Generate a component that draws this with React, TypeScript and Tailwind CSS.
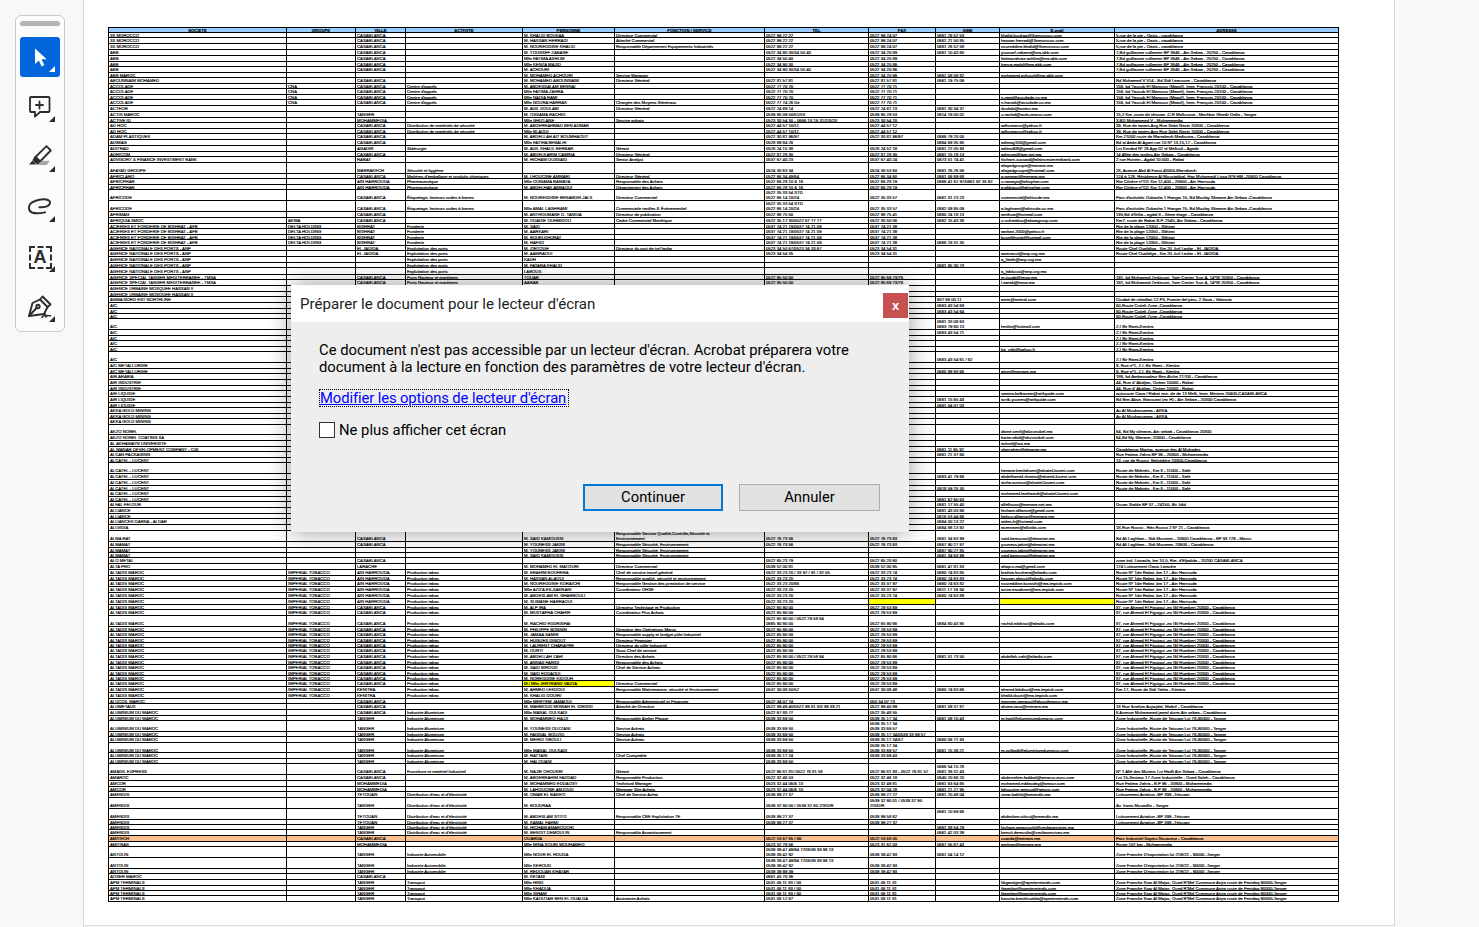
import React from "react";

const gridCols = "grid grid-cols-[178px_69px_50px_117px_92px_150px_104px_67px_64px_115px_224px]";
const HEADERS = ["SOCIETE", "GROUPE", "VILLE", "ACTIVITE", "PERSONNE", "FONCTION / SERVICE", "TEL", "FAX", "GSM", "E-mail", "ADRESSE"];

const OASIS = "5,rue de la pie - Oasis - casablanca";
const ABB_AD = "7,Bd guillaume vullemier BP 3646 - Ain Sebaa , 20250 - Casablanca";
const ACC_AD = "156, bd Yacoub El Mansour (Maarif), Imm. François 20100 - Casablanca";
const ADHOC_AD = "39, Rue de tantes Ang Rue Sebti Nevin 20300 - Casablanca";
const AFCODE_AD = "Parc d'activités Oukacha 1 Hangar 15, Bd Moulay Slimane Ain Sebaa -Casablanca";
const PHAR_AD = "Rte Côtière n°111 Km 12,400 - 20600 - Ain Harrouda";
const PLAGE = "Rte de la plage 12050 - Skhirat";
const ANP = "AGENCE NATIONALE DES PORTS - ANP";
const TMSA = "AGENCE SPECIAL TANGER MEDITERRANEE - TMSA";
const TMSA_AD = "191, bd Mohamed Zerktouni, Twin Center Tour A, 14°W 20350 - Casablanca";
const ANP_AD = "Route Chel Oualidiya , Km 20 Jorf Lasfar - EL JADIDA";
const ACIER = "ACIERIES ET FONDERIE DE BISHRAT - AFB|DELTA HOLDING|BISHRAT|Fonderie";
const COTIERE = "60,Route Cotieli Zone -Casablanca";
const RAMI = "Z.I Bir Rami-Kenitra";
const MEKNES = "Route de Meknès , Km 8 - 11000 - Salé";
const ALT = "ALTADIS MAROC|IMPERIAL TOBACCO";
const ALTH = `${ALT}|AIN HARROUDA|Production tabac`;
const ALTC = `${ALT}|CASABLANCA|Production tabac`;
const ALTK = `${ALT}|KENITRA|Production tabac`;
const HAR_AD = "Route N° 1de Rabat ,km 17 - Ain Harrouda";
const FIG_AD = "87, rue Ahmed El Figuigui -ex Gil Humbert 20300 - Casablanca";
const ALUT = "ALUMINIUM DU MAROC||TANGER|Industrie Aluminium";
const TET_AD = "Zone Industrielle ,Route de Tetouan Lot 78-90000 - Tanger";
const LOT_AD = "Lotissement Aviation -BP 399 -Tétouan";
const DIST = "Distribution d'eau et d'électricité";
const ANT = "ANTOLIN||TANGER|Industrie Automobile";
const ZF = "Zone Franche D'exportation lot 21B/22 - 90000 -Tanger";
const APM = "APM TERMINALS||TANGER|Transport";
const KSAR = "Zone Franche Ksar Al Majaz, Oued R'Mel Commune Anjra route de Fenidaq 90000-Tanger";
const FIX = "0522 65 90 00|0522 29 53 69";
const ALMA_T = "Responsable Sécurité, Environnement";

// row bottom edge (y in page) | société | groupe | ville | activité | personne | fonction | tel | fax | gsm | email | adresse
const ROWS: [number, string][] = [
  [38, `3S MOROCCO||CASABLANCA||M. KHALID BOUKAA|Directeur Commercial|0522 99 22 22|0522 99 24 07|0661 26 52 53|khalid-boukaa@3smorocco.com|${OASIS}`],
  [44, `3S MOROCCO||CASABLANCA||M. HASSAN HERRADI|Attaché Commercial|0522 99 22 22|0522 99 24 07|0661 21 50 85|hassan.herradi@3smorocco.com|${OASIS}`],
  [50, `3S MOROCCO||CASABLANCA||M. NOUREDDINE KHALID|Responsable Département Equipements Industriels|0522 99 22 22|0522 99 24 07|0661 26 52 58|noureddine.khalid@3smorocco.com|${OASIS}`],
  [56, `ABB||CASABLANCA||M. YOUSSEF ZABANE||0522 34 90 30/34 50 40|0522 34 20 89|0661 10 43 80|youssef.zabane@ma.abb.com|${ABB_AD}`],
  [62, `ABB||CASABLANCA||Mlle FATIMA ASHLIM||0522 34 50 40|0522 34 20 89||fatimazahrae.ashlim@ma.abb.com|${ABB_AD}`],
  [67, `ABB||CASABLANCA||Mlle KENZA MAJID||0522 34 90 30|0522 34 20 86||kenza.majid@ma.abb.com|${ABB_AD}`],
  [73, `ABB||CASABLANCA||M. ACHOURI||0522 34 90 30/34 50 40|0522 34 20 86|||${ABB_AD}`],
  [78, `ABB MAROC||||M. MOHAMED ACHOURI|Service Manager||0522 34 20 86|0661 08 08 82|mohamed.achouri@ma.abb.com|`],
  [84, `ABOUNNAIM MOHAMED||CASABLANCA||M. MOHAMED ABOUNNAIM|Directeur Général|0522 81 57 81|0522 81 57 81|0661 19 75 09||Bd Mohamed V 514 - Bd Sidi Laaroune - Casablanca`],
  [89, `ACCOLADE|CNA|CASABLANCA|Centre d'appels|M. ABDESSALAM BENNAI||0522 77 70 70|0522 77 70 71|||${ACC_AD}`],
  [95, `ACCOLADE|CNA|CASABLANCA|Centre d'appels|Mlle FATIMA ZAHRA||0522 77 70 70|0522 77 70 71|||${ACC_AD}`],
  [100, `ACCOLADE|CNA|CASABLANCA|Centre d'appels|Mlle NADIA RAMI||0522 77 70 70|0522 77 70 71||n.rami@accolade.co.ma|${ACC_AD}`],
  [106, `ACCOLADE|CNA|CASABLANCA|Centre d'appels|Mlle NOURA HARRAK|Chargée des Moyens Généraux|0522 77 74 26 Dir|0522 77 70 71||n.harrak@accolade.co.ma|${ACC_AD}`],
  [112, `ACTEOR||||M. ADIL DOULABI|Directeur Général|0522 24 89 14|0522 24 81 13|0661 30 34 37|doulabi@acteor.ma|`],
  [118, `ACTIS MAROC||TANGER||M. OSSAMA RACHID||0539 95 09 50/51/53|0539 95 29 53|0614 18 00 02|o.rachid@actis-maroc.com|15,2 Km ,route de tétouan ,C.R Melloussa , Mechkar Ghedir Dalla - Tanger`],
  [123, `ACTIVE ID||MOHAMMEDIA||Mlle GHIZLANE|Service achats|0523 30 54 30 - 0666 18 19 31/2/3/20|0523 30 54 20|||3,BD Mohammed V - Mohammedia`],
  [129, `AD HOC||CASABLANCA|Distribution de matériels de sécurité|M. ABDERRAHMAD BEN ADMAR||0522 44 57 10/11|0522 44 57 12||adhomaroc@yahoo.fr|${ADHOC_AD}`],
  [134, `AD HOC||CASABLANCA|Distribution de matériels de sécurité|Mlle BLAOUI||0522 44 57 10/11|0522 44 57 12||adhomaroc@yahoo.fr|${ADHOC_AD}`],
  [140, `ADAM PLASTIQUES||CASABLANCA||M. ABDELLAH AIT BOUMHAOUT||0522 30 81 96/97|0522 30 81 96/97|0666 79 20 00||Km 21000 route de Marrakech Mediouna - Casablanca`],
  [146, `ADIMAG||CASABLANCA||Mlle FATIHA BEBALHI||0528 89 84 26||0664 69 35 95|adimag100@gmail.com|Bd al Aéde Al Agani rue 10 N° 13,15,17 - Casablanca`],
  [152, `ADITRAD||AGADIR|Sidérurgie|M. ADIL KHALIL BERBAR|Gérant|0528 24 15 38|0528 24 52 18|0661 22 05 93|aditrad09@gmail.com|Lot Kerdad N° 26 App 02 el Mellouli - Agadir`],
  [157, `ADRICOM||CASABLANCA||M. ABDELKARIM CAMINA|Directeur Général|0522 87 28 30|0522 87 28 30|0661 15 18 13|adricom@iam.net.ma|14 Allée des jardins Ain Sebaa - Casablanca`],
  [163, `ADVISORY & FINANCE INVESTMENT BANK||RABAT||M. HICHAM OUSSAID|Senior Analyst|0537 67 40 23|0537 67 40 24|0673 51 74 41|hicham.oussaid@afainvestmentbank.com|2 rue Honein - Agdal 10 000 - Rabat`],
  [174, `AFAYAD GROUPE||MARRAKECH|Sécurité et hygiène|||0524 30 63 34|0524 30 53 60|0661 26 26 56|afayadgroupe@menara.ma~afayadgroupe@hotmail.com|28, Avenue Abd Al Fassi,40000-Marrakech`],
  [179, `AFRICLARO||CASABLANCA|Matières d'emballage et produits chimiques|M. LHOUCINE AMMARI|Directeur Général|0522 66 34 49/64|0522 66 34 60|0661 06 69 68|a.ammari@menara.ma|124 à 128, Résidence Al Moustakbal, Hay Mohamadi Lissa N°9 HM -20600 Casablanca`],
  [185, `AFRICPHAR||AIN HARROUDA|Pharmaceutique|Mlle OUMAMA RAMAYA|Responsable des Achats|0522 66 28 10 & 16|0522 66 28 19|0666 41 61 97/0661 92 35 92|o.ramaya@africphar.com|${PHAR_AD}`],
  [190, `AFRICPHAR||AIN HARROUDA|Pharmaceutique|M. ABDELHAK ABBAOUI|Département des Achats|0522 66 28 10 & 16|0522 66 28 19||a.abbaoui@africphar.com|${PHAR_AD}`],
  [201, `AFRICODE||CASABLANCA|Étiquetage, lecteurs codes à barres|M. NOUREDDINE BENABDELJALIL|Directeur Commercial|0522 35 33 54 STD~0522 66 14 20/24|0522 35 33 57|0661 31 23 23|commercial@africode.ma|${AFCODE_AD}`],
  [212, `AFRICODE||CASABLANCA|Étiquetage, lecteurs codes à barres|Mlle AMAL LAGHRAMI|Commerciale textiles & Événementiel|0522 35 33 54 STD~0522 66 14 20/24|0522 35 33 57|0662 09 95 09|a.laghrami@africode.co.ma|${AFCODE_AD}`],
  [218, `AFRIMAG||CASABLANCA||M. ANTHOUMANE D. TANDIA|Directeur de publication|0522 98 75 50|0522 98 75 41|0660 24 18 13|amthoa@hotmail.com|195,Bd d'Ifrifia - agdal 8 - 3ème étage - Casablanca`],
  [224, `AFRIQUIA SMDC|AKWA|CASABLANCA||M. OUADIE OUHMIDOU|Cadre Commercial Marétique|0522 35 17 30/0522 67 77 77|0522 35 50 56|0662 15 43 38|o.ouhmidou@akwagroup.com|Km7, route de Rabat B.P. 2545, Ain Sebaa - Casablanca`],
  [229, `${ACIER}|M. SAID||0537 74 21 19/0537 74 21 09|0537 74 21 38|||${PLAGE}`],
  [235, `${ACIER}|M. AARKARI||0537 74 21 19/0537 74 21 09|0537 74 21 38||aarkari.2000@yahoo.fr|${PLAGE}`],
  [240, `${ACIER}|M. BOUELKHURAT||0537 74 21 19/0537 74 21 09|0537 74 21 38||bouelkhurat@hotmail.com|${PLAGE}`],
  [246, `${ACIER}|M. HAFIDI||0537 74 21 19/0537 74 21 09|0537 74 21 38|0666 19 31 35||${PLAGE}`],
  [251, `${ANP}||EL JADIDA|Exploitation des ports|M. ZIRTOUH|Directeur du port de jorf lasfar|0523 34 50 67/0523 34 33 67|0523 34 54 31|||${ANP_AD}`],
  [257, `${ANP}||EL JADIDA|Exploitation des ports|M. AAMRAOUI||0523 34 54 35|0523 34 54 31||aamraoui@anp.org.ma|${ANP_AD}`],
  [263, `${ANP}|||Exploitation des ports|KADH|||||a_fatah@anp.org.ma|`],
  [268, `${ANP}|||Exploitation des ports|M. FATARA KHALID||||0661 95 30 73||`],
  [275, `${ANP}|||Exploitation des ports|LABOUS|||||a_labbous@anp.org.ma|`],
  [280, `${TMSA}||CASABLANCA|Ports Navieux et maritimes|TOUAR||0522 95 50 00|0522 95 69 73/76||m.touab@tmsa.ma|${TMSA_AD}`],
  [286, `${TMSA}||CASABLANCA|Ports Navieux et maritimes|AARAB||0522 95 50 00|0522 95 69 73/76||l.aarab@tmsa.ma|${TMSA_AD}`],
  [292, `AGENCE URBAINE MOSQUEE HASSAN II||||||||||`],
  [297, `AGENCE URBAINE MOSQUEE HASSAN II||||||||||`],
  [303, `AGMA NORD EST NORTHLINE||||||||607 66 00 11|amin@amival.com|Ciudad de cittadlan 12 P3, Fuente del pino, 2 Saca - Valencia`],
  [309, `AIC||||||||0663 43 54 69||${COTIERE}`],
  [314, `AIC||||||||0663 43 54 64||${COTIERE}`],
  [319, `AIC||||||||||${COTIERE}`],
  [330, `AIC||||||||0661 33 08 63~0663 79 60 13|hmitte@hotmail.com|${RAMI}`],
  [336, `AIC||||||||0663 43 54 71||${RAMI}`],
  [341, `AIC||||||||||${RAMI}`],
  [347, `AIC||||||||||${RAMI}`],
  [352, `AIC|||||||||ka_zeki@yahoo.fr|${RAMI}`],
  [363, `AIC||||||||0663 43 54 61 / 62||${RAMI}`],
  [369, `AIC METALLURGIE||||||||||9, Rue n°1, Z.I. Bir Rami - Kénitra`],
  [374, `AIC METALLURGIE||||||||0660 99 93 66|aiion@menara.ma|9, Rue n°1, Z.I. Bir Rami - Kénitra`],
  [380, `AIR ARABIA||||||||||186, bd Ambassadeur Ben Aïcha 21700 - Casablanca`],
  [386, `AIR INDUSTRIE||||||||||44, Rue d' Abidjan, Océan 10000 - Rabat`],
  [391, `AIR INDUSTRIE||||||||||44, Rue d' Abidjan, Océan 10000 - Rabat`],
  [397, `AIR LIQUIDE|||||||||samira.belbacem@airliquide.com|autoroute Casa / Rabat ecn. de de 13 Melli, Imm. Meriem 20400-CASABLANCA`],
  [403, `AIR LIQUIDE||||||||0661 15 65 43|azrib.younes@airliquide.com|Bd Ben Abse, Biarouani (ex H) - Ain Sebaa - 20300 Casablanca`],
  [408, `AIR LIQUIDE||||||||0661 04 07 03||`],
  [414, `AKKA GOLD MINING||||||||||Av Al Moukaouama - AKKA`],
  [419, `AKKA GOLD MINING||||||||||Av Al Moukaouama - AKKA`],
  [425, `AKKA GOLD MINING||||||||||`],
  [435, `AKZO NOBEL|||||||||diane.senfi@akzonobel.ma|64, Bd My slimane- Ain sebaâ - Casablanca 20300`],
  [441, `AKZO NOBEL COATING SA|||||||||karim.abid@akzonobel.com|64,Bd My Slimane, 20300 - Casablanca`],
  [447, `AL AKHAWAYN UNIVERSITE|||||||||ashraf@aui.ma|`],
  [452, `AL MANAR DEVELOPMENT COMPANY - CGI||||||||0661 11 65 92|yberrahim@almanar.ma|Casablanca Marina, avenue des Al Mohades`],
  [458, `ALCAN PACKAGING||||||||0661 21 37 60||Rue Fatima Zahra BP 96 - 20800 - Mohammedia`],
  [463, `ALCATEL - LUCENT||||||||||13, rue de Rocroi, Belvédère 20300-Casablanca`],
  [474, `ALCATEL - LUCENT|||||||||hanane.benlahsen@alcatel-lucent.com|${MEKNES}`],
  [480, `ALCATEL - LUCENT||||||||0663 41 79 68|abdelhamid.chemsi@alcatel-lucent.com|${MEKNES}`],
  [486, `ALCATEL - LUCENT|||||||||aicha.aznioui@alcatel-lucent.com|${MEKNES}`],
  [491, `ALCATEL - LUCENT||||||||0618 59 25 30||${MEKNES}`],
  [497, `ALCATEL - LUCENT|||||||||mohamed.lamhamdi@alcatel-lucent.com|`],
  [502, `ALCATEL - LUCENT||||||||0661 62 60 63||`],
  [508, `ALFAL FELOUR||||||||0661 17 55 40|alfellouss@menara.net.ma|Douar Stable BP 37 - 24150- Bir Jdid`],
  [514, `ALLIANCE||||||||0661 43 03 66|hicham.alliance@gmail.com|`],
  [519, `ALLIANCE||||||||0616 53 44 66|bahou.alliance@menara.ma|`],
  [525, `ALLIANCES DARNA - ALDAR||||||||0664 00 13 22|aiden-h@hotmail.com|`],
  [531, `ALLVIDIA||||||||0664 98 13 92|asennami@allvidia.com|18,Rue Rocroi , Rés Rocroi 2 N° 21 - Casablanca`],
  [542, `ALMA RAT||CASABLANCA||M. SAID KAMOUSSI|Responsable Service Qualité,Contrôle,Sécurité et~Environnement|0522 76 73 56|0522 76 73 63|0661 34 63 99|said.kamoussi@almatrat.ma|Bd Ali Laghlam - Sidi Moumen - 20600 Casablanca - BP 93 729 - Maroc`],
  [548, `ALMAMAT||CASABLANCA||M. YOUNESS JAKINI|${ALMA_T}|0522 76 73 56|0522 76 73 63|0667 90 27 87|youness.jakini@almatrat.ma|Bd Ali Laghlam - Sidi Moumen, 20600 - Casablanca`],
  [553, `ALMAMAT||||M. YOUNESS JAKINI|${ALMA_T}|||0667 90 27 85|youness.jakini@almatrat.ma|`],
  [558, `ALMAMAT||||M. SAID KAMOUSSI|${ALMA_T}|||0661 34 63 99|said.kamoussi@almatrat.ma|`],
  [564, `ALO METAL||CASABLANCA||||0522 65 23 79|0522 65 20 60|||zone ind. Lissasfa, km 10,5, Rte. d'Eljadida - 20200 CASABLANCA`],
  [570, `ALTA PRO||LARACHE||M. MOHAMED EL MATOURI|Directeur Commercial|0539 52 00 81|0539 52 00 95|0661 47 81 83|altapro.ma@gmail.com|174 Lotissement Oasis Larache`],
  [576, `${ALTH}|M. ERAHIM BOUHERA|Chef de service travel général|0522 33 23 20 / 33 97 / 91 / 82 05|0522 33 23 74|0660 74 63 85|brahim.bouhera@altadis.com|${HAR_AD}`],
  [581, `${ALTH}|M. HASSAN ALAOUI|Responsable qualité, sécurité et environnement|0522 33 23 20|0522 33 23 74|0660 74 63 83|hassan.alaoui@altadis.com|${HAR_AD}`],
  [587, `${ALTH}|M. NOUREDDINE KORAICHI|Responsable Gestion des prestation de service|0522 33 23 20/66|0522 33 37 97|0660 74 63 82|noureddine.koraichi@ma.imptob.com|${HAR_AD}`],
  [593, `${ALTH}|Mlle AZIZA ES-SAKRANI|Coordinateur OHSE|0522 33 23 20|0522 33 37 97|0611 17 19 34|aziza.essakrani@ma.imptob.com|${HAR_AD}`],
  [599, `${ALTH}|M. ABDESLAM EL GHARBOULI||0522 33 23 20|0522 33 23 74|0660 74 63 89||${HAR_AD}`],
  [605, `${ALTH}|M. SLIMANE HARRAOUI||0522 33 23 20||||${HAR_AD}`],
  [610, `${ALTC}|M. ALP IRA|Directeur Technique et Production|${FIX}|||${FIG_AD}`],
  [616, `${ALTC}|M. MUSTAPHA CHAHIR|Coordinateur Flux Achats|${FIX}|||${FIG_AD}`],
  [627, `${ALTC}|M. RACHID EDDRISHAI||0522 65 90 00 / 0522 29 58 64~0665 90 90 00|0522 65 90 66|0664 60 43 95|rachid.eddrissi@altadis.com|${FIG_AD}`],
  [632, `${ALTC}|M. PHILIPPE BONNIN|Directeur des Opérations Maroc|${FIX}|||${FIG_AD}`],
  [638, `${ALTC}|M. JAMAA SAMIR|Responsable supply et budget pôle Industriel|${FIX}|||${FIG_AD}`],
  [643, `${ALTC}|M. HUGUES DIGOUT|Directeur Financier|${FIX}|||${FIG_AD}`],
  [648, `${ALTC}|M. LAURENT CHARAYRE|Directeur du pôle Industriel|${FIX}|||${FIG_AD}`],
  [654, `${ALTC}|M. OURTI|Sous Chef de service|${FIX}|||${FIG_AD}`],
  [660, `${ALTC}|M. ABDELLAH ZAHI|Direction des Achats|0522 65 90 00 / 0522 29 58 64|0522 65 90 66|0661 51 73 50|abdellah.zahi@altadis.com|${FIG_AD}`],
  [665, `${ALTC}|M. ANNAS FARIDI|Responsable des Achats|${FIX}|||${FIG_AD}`],
  [671, `${ALTC}|M. SAID BIROUD|Chef de Service Achats|${FIX}|||${FIG_AD}`],
  [676, `${ALTC}|M. SAID EDDAOUI||${FIX}|||${FIG_AD}`],
  [681, `${ALTC}|M. NOREDDINE KIDOUH||${FIX}|||${FIG_AD}`],
  [687, `${ALTC}|M./ Mlle JERTRAND VAIZIA|Directeur Commercial|${FIX}|||${FIG_AD}`],
  [693, `${ALTK}|M. AHMED LEKDOUI|Responsable Maintenance, sécurité et Environnement|0537 30 08 50/52|0537 30 08 48|0660 74 63 66|ahmed.lekdioui@ma.imptob.com|Km 17, Route de Sidi Yahia - Kénitra`],
  [699, `${ALTK}|M. KHALID DOUIRI|||||khalid.douiri@ma.imptob.com|`],
  [704, `ALUCOIL MAROC||CASABLANCA||Mlle MERYEM JAMAOUI|Responsable Administratif et Financier|0522 34 07 74|050 34 07 73||meryem.jamaoui@alucoilmaroc.ma|`],
  [710, `ALUMETAUX||CASABLANCA||M. MAHMOUD MISBAH EL IDRISSI|Attaché de Direction|0522 99 49 40/0522 99 81 93/ 99 39 21|0522 99 40 99|0661 09 37 87|alume-taux@menara.ma|18 Rue Ibrahim Aujarjdal, Maârif - Casablanca`],
  [716, `ALUMINIUM DU MAROC||CASABLANCA|Industrie Aluminium|Mlle MANAL OULKADI||0522 67 80 77|0522 35 48 55|||6 Avenue Mohammed jamal dorra Ain sebaa - Casablanca`],
  [721, `${ALUT}|M. MOHAMMED HAJJI|Responsable Atelier Plaque|0539 33 69 50|0539 35 17 34|0661 09 10 43|m.hajji@aluminiumdumaroc.com|${TET_AD}`],
  [732, `${ALUT}|M. YOUNESS OUZZANI|Service Achats|0539 33 69 50|0539 35 17 34~0539 33 69 57|||${TET_AD}`],
  [737, `${ALUT}|M. FAISSAL BOUZID|Service Achats|0539 33 69 50|0539 35 17 34/0539 33 69 57|||${TET_AD}`],
  [743, `${ALUT}|M. MEHDI TIBOULI|Service Achats|0539 33 69 50|0539 35 17 34/57|0660 06 71 93||${TET_AD}`],
  [753, `${ALUT}|Mlle MANAL OULKADI||0539 33 69 50|0539 35 17 34~0539 33 69 57|0661 15 38 21|m.oulkadi@aluminiumdumaroc.com|${TET_AD}`],
  [759, `${ALUT}|M. RATTANI|Chef Comptable|0539 35 17 24|0539 33 69 43|||${TET_AD}`],
  [764, `${ALUT}|M. HALOUANI||0539 33 69 50||||${TET_AD}`],
  [775, `AMADIL EXPRESS||CASABLANCA|Fourniture et matériel Industriel|M. NAJIB CHOUKRI|Gérant|0522 66 81 81/ 0522 76 81 58|0522 66 81 93 - 0522 76 81 57|0666 54 15 28~0661 39 32 43||N° 1 Allé des Muriers Lot Hadfi Ain Sebaa - Casablanca`],
  [781, `AMAROC||CASABLANCA||M. ABDERRAHIM FADDAD|Responsable Production|0522 32 46 53|0522 32 46 18|0640 20 66 20|abderrahim.faddad@amaroc-ecro.com|Lot 15-Secteur 17 Zone Industrielle , Oued Saleh - Casablanca`],
  [787, `AMCOR||MOHAMMEDIA||M. MOHAMMED EDDAOSY|Technical Manager|0523 32 44 06/& 13|0523 32 49 81|0661 63 64 65|mohamed.eddaoday@amcor.com|Rue Fatima Zahra - B.P 96 , 20800 - Mohammedia`],
  [792, `AMCOR||MOHAMMEDIA||M. LAHOUCINE AMJOUD|Manager Site Achats|0523 32 44 06/& 10|0523 32 04 28|0661 21 27 95|lahoucine.amjoud@amcor.com|Rue Fatima Zahra - B.P 96 , 20800 - Mohammedia`],
  [798, `AMENDIS||TETOUAN|${DIST}|M. OMAR EL BAKHTI|Chef de Service Achat|0539 99 27 37|0539 99 27 27|0661 20 48 04|omar.bakhti@amendis.ma|${LOT_AD}`],
  [809, `AMENDIS||TANGER|${DIST}|M. BOUDRAA||0539 32 90 00 / 0539 32 60 2/3/D/R|0539 32 90 01 / 0539 32 90~2/3/D/R|||Av. Iranis Mouadlin - Tanger`],
  [820, `AMENDIS||TETOUAN|${DIST}|M. ABDESLAM STITO|Responsable CBE Exploitation TE|0539 99 27 37|0539 99 58 62|0661 10 69 66~ |abdeslam.stitou@amendis.ma|${LOT_AD}`],
  [825, `AMENDIS||TETOUAN|${DIST}|M. KAMAL FAHMI||0539 99 27 37|0539 99 27 37|||${LOT_AD}`],
  [830, `AMENDIS||TANGER|${DIST}|M. HICHAM AMAROUCHI||||0661 38 54 29|hicham.amarouchi@veoliaservices.ma|`],
  [836, `AMENDIS||TANGER|${DIST}|M. BENOIT DEMOULIN|Responsable Assainissement|||0661 42 03 39|benoit.demoulin@veoliaservices.ma|`],
  [842, `AMITECH||CASABLANCA||OUARDA||0522 53 67 65 / 66|0522 53 68 05||ouarda@menara.ma|Parc Industriel Sapino Nouaceur - Casablanca`],
  [847, `AMITRAS||MOHAMMEDIA||Mlle MINA SOURI MOUHAMED||0523 32 78 56|0523 31 62 03|0667 05 87 43|amitras@menara.ma|Route 107 km - Mohammedia`],
  [858, `${ANT}|Mlle NOUR EL HOUDA||0539 39 47 49/94 72/0539 39 99 13~0539 39 42 92|0539 39 42 93|0661 04 14 12||${ZF}`],
  [869, `${ANT}|Mlle KEROUD||0539 39 47 49/94 72/0539 39 99 13~0539 39 42 92|0539 39 42 93|||${ZF}`],
  [874, `${ANT}|M. REDOUAN KHAYAR||0539 39 99 39|0539 39 42 93|||${ZF}`],
  [880, `AOSER MAROC||CASABLANCA||M. KETANI||0661 43 70 36||||`],
  [886, `${APM}|Mlle HIND||0531 06 11 83 / 00|0531 06 11 81||hbgantiger@apmterminals.com|${KSAR}`],
  [891, `${APM}|Mlle KHADIJA||0531 06 11 83 / 00|0531 06 11 81||tkamitiar@apmterminals.com|${KSAR}`],
  [896, `${APM}|Mlle SIHAM||0531 06 11 83 / 00|0531 06 11 81||tkamitiar@apmterminals.com|${KSAR}`],
  [902, `${APM}|Mlle KAOUTAR BEN EL OUALDA|Assistante Achats|0531 06 12 87|0531 06 11 81||kaoutar.beneloualda@apmterminals.com|${KSAR}`],
];

const cellBg = (end: number, col: number) => {
  if (end === 842) return "bg-[#fac090]";
  if (end === 687 && col === 4) return "bg-[#ffff00]";
  if (end === 605 && (col === 7 || col === 9)) return "bg-[#ffff00]";
  return "";
};

const PdfTable = () => {
  let prev = 33;
  return (
    <div className="w-[1231px] border-l border-t border-black font-['Liberation_Sans',sans-serif] text-[4.25px] leading-[5px] text-black [-webkit-text-stroke:0.15px_black]">
      <div className={`${gridCols} h-[5px] border-b border-black bg-[#99ccff] font-bold`}>
        {HEADERS.map((h) => (
          <div key={h} className="flex items-end justify-center border-r border-black">
            {h}
          </div>
        ))}
      </div>
      {ROWS.map(([end, line]) => {
        const height = end - prev;
        prev = end;
        const cells = line.split("|");
        return (
          <div key={end} className={`${gridCols} border-b border-black`} style={{ height }}>
            {Array.from({ length: 11 }).map((_, i) => (
              <div
                key={i}
                className={`flex min-w-0 items-end whitespace-pre border-r border-black pl-px ${cellBg(end, i)}`}
              >
                <span>{(cells[i] ?? "").replace("~", "\n")}</span>
              </div>
            ))}
          </div>
        );
      })}
    </div>
  );
};

const Corner = ({ light }: { light?: boolean }) => (
  <svg viewBox="0 0 6 6" className="absolute left-[29px] top-[29px] h-[6px] w-[6px]">
    <path d="M6 0V6H0Z" fill={light ? "#ffffff" : "#2c2c2c"} />
  </svg>
);

const ToolButton = ({ active, children }: { active?: boolean; children: React.ReactNode }) => (
  <div className={`relative flex h-10 w-10 items-center justify-center rounded-[3px] ${active ? "bg-[#0265dc]" : ""}`}>
    {children}
    <Corner light={active} />
  </div>
);

const Sidebar = () => (
  <div className="w-[84px] shrink-0 border-r border-[#d9d9d9] bg-[#f8f8f8] pl-[15px] pt-[15px]">
    <div className="flex h-[317px] w-[50px] flex-col items-center gap-[10px] rounded-[6px] border border-[#c9c9c9] bg-[#fbfbfb] px-1 pt-[5px]">
      <div className="mb-px h-[5px] w-10 rounded-full bg-[#b3b3b3]" />
      <ToolButton active>
        <svg viewBox="0 0 24 24" className="h-6 w-6">
          <path d="M7 3.5v15.5l3.8-3.6 2.8 6 2.7-1.3-2.8-5.8h5.2z" fill="#fff" />
        </svg>
      </ToolButton>
      <ToolButton>
        <svg viewBox="0 0 24 24" className="h-6 w-6" fill="none" stroke="#2c2c2c" strokeWidth="1.8" strokeLinejoin="round" strokeLinecap="round">
          <path d="M3 2h17.500a1 1 0 0 1 1 1v13a1 1 0 0 1-1 1h-8.500l-5 4.700v-4.700H3a1 1 0 0 1-1-1V3a1 1 0 0 1 1-1z" />
          <path d="M11.500 6.500v7M8 10h7" />
        </svg>
      </ToolButton>
      <ToolButton>
        <svg viewBox="0 0 24 24" className="h-6 w-6" fill="none" stroke="#2c2c2c" strokeWidth="1.8" strokeLinejoin="round">
          <path d="M18.500 1.200l4.300 4.300-10.800 11-4.500-4.500z" />
          <path d="M7.500 12l4.500 4.500-2.500 2-4-3.500z" fill="#2c2c2c" />
          <path d="M4.500 15.500l4 4H1z" fill="#2c2c2c" stroke="none" />
          <path d="M9.300 20l4.400-4.300H22L18.700 20z" fill="#a6a6a6" stroke="none" />
        </svg>
      </ToolButton>
      <ToolButton>
        <svg viewBox="0 0 24 24" className="h-6 w-6" fill="none" stroke="#2c2c2c" strokeWidth="1.9" strokeLinecap="round">
          <path d="M17 17.300C12 18.500 7 18.500 4 17.500 1.500 16.500 .8 14 1 12c.5-3 3-5 6-6 4-1.500 8-2 11-1.500 3 .5 4.500 2 4 3.500-.5 2.500-4 4-8 4.300h-2.700" />
        </svg>
      </ToolButton>
      <ToolButton>
        <div className="flex h-[23px] w-[23px] items-center justify-center border-2 border-dashed border-[#2c2c2c] font-['Liberation_Sans',sans-serif] text-[18px] font-bold leading-none text-[#2c2c2c]">
          A
        </div>
      </ToolButton>
      <ToolButton>
        <svg viewBox="0 0 24 24" className="h-6 w-6" fill="none" stroke="#2c2c2c" strokeWidth="1.9" strokeLinejoin="round" strokeLinecap="round">
          <path d="M1 21L4.500 8 12 4.500l7.500 7.500L16 19z" />
          <path d="M12 4.500L14.500 1.500l8 8L19.500 12" />
          <path d="M1 21l7.500-8" />
          <circle cx="10" cy="11.500" r="1.700" />
          <path d="M14 22.500c1-1.500 2.500-3.500 3.500-3 .8.500-.3 2-.3 2.300 1 .3 1.800-1.500 2.800-1.300l2.500.3" strokeWidth="1.500" />
        </svg>
      </ToolButton>
    </div>
  </div>
);

const ScreenReaderDialog = () => (
  <div className="absolute left-[291px] top-[285px] flex h-[247px] w-[618px] flex-col bg-[#eeeeee] font-['Roboto',sans-serif] text-[14.800px] text-black shadow-[0_0_22px_rgba(0,0,0,0.4)]">
    <div className="flex h-[37px] shrink-0 items-start justify-between bg-white pl-[9px] pr-px pt-2">
      <span className="text-[15.100px] leading-[22px] text-[#222]">Préparer le document pour le lecteur d'écran</span>
      <div className="flex h-[25px] w-[25px] items-center justify-center bg-[#c75050] font-['Liberation_Sans',sans-serif] text-[13px] font-bold text-white">
        x
      </div>
    </div>
    <div className="flex flex-1 flex-col pl-7 pr-[20px] pt-5">
      <p className="whitespace-nowrap leading-[17px]">
        Ce document n'est pas accessible par un lecteur d'écran. Acrobat préparera votre
        <br />
        document à la lecture en fonction des paramètres de votre lecteur d'écran.
      </p>
      <a className="mt-[13px] flex h-[18px] w-[250px] items-center border border-dotted border-black tracking-[-0.1px] text-[#0000ff] underline">
        Modifier les options de lecteur d'écran
      </a>
      <label className="mt-[15px] flex items-center gap-1 leading-[16px]">
        <span className="h-4 w-4 border border-[#333] bg-white" />
        Ne plus afficher cet écran
      </label>
      <div className="mt-[46px] flex gap-4">
        <div className="ml-[264px] flex h-[27px] w-[140px] items-center justify-center border-2 border-[#0078d7] bg-[#e1e1e1]">Continuer</div>
        <div className="flex h-[27px] w-[141px] items-center justify-center border border-[#adadad] bg-[#e1e1e1]">Annuler</div>
      </div>
    </div>
  </div>
);

export default function App() {
  return (
    <div className="relative flex h-[927px] w-[1479px] overflow-hidden bg-[#f8f8f8]">
      <Sidebar />
      <div className="h-[926px] w-[1311px] shrink-0 border-b border-r border-[#d9d9d9] bg-white pl-6 pt-[27px]">
        <PdfTable />
      </div>
      <ScreenReaderDialog />
    </div>
  );
}
